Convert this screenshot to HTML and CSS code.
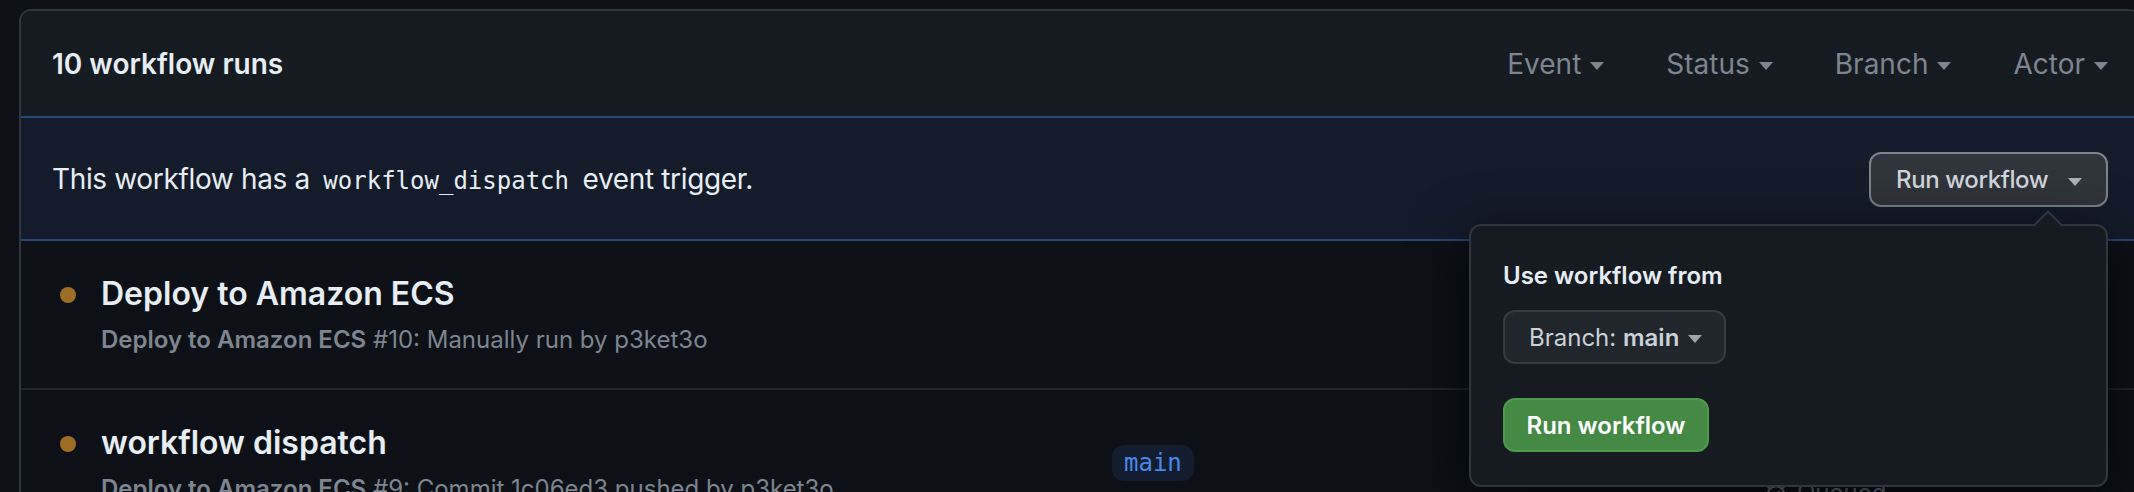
FILE: index.html
```html
<!DOCTYPE html>
<html lang="en">
<head>
<meta charset="utf-8">
<title>Workflow runs</title>
<link rel="stylesheet" href="styles.css">
</head>
<body>
<div class="page">
  <div class="card">
    <div class="header">
      <h3 class="count">10 workflow runs</h3>
      <div class="filters">
        <span class="filter">Event<span class="caret"></span></span>
        <span class="filter">Status<span class="caret"></span></span>
        <span class="filter">Branch<span class="caret"></span></span>
        <span class="filter">Actor<span class="caret"></span></span>
      </div>
    </div>
    <div class="banner">
      <p class="banner-text">This workflow has a <code>workflow_dispatch</code> event trigger.</p>
      <div class="dispatch">
        <button class="btn-run"><span>Run workflow</span><span class="caret"></span></button>
        <div class="popover">
          <div class="pop-label">Use workflow from</div>
          <button class="btn-branch"><span class="b-text"><span class="b-label">Branch:</span> <span class="b-name">main</span></span><span class="caret"></span></button>
          <button class="btn-green">Run workflow</button>
        </div>
      </div>
    </div>
    <div class="runs">
      <div class="run">
        <div class="run-main">
          <span class="dot"></span>
          <div class="run-text">
            <div class="run-title">Deploy to Amazon ECS</div>
            <div class="run-sub"><strong>Deploy to Amazon ECS</strong> #10: Manually run by p3ket3o</div>
          </div>
        </div>
        <div class="run-branch"></div>
        <div class="run-meta"></div>
      </div>
      <div class="run">
        <div class="run-main">
          <span class="dot"></span>
          <div class="run-text">
            <div class="run-title">workflow dispatch</div>
            <div class="run-sub"><strong>Deploy to Amazon ECS</strong> #9: Commit 1c06ed3 pushed by p3ket3o</div>
          </div>
        </div>
        <div class="run-branch"><span class="tag">main</span></div>
        <div class="run-meta">
          <span class="meta-line"><svg class="meta-icon" viewBox="0 0 16 16" width="22" height="22"><path fill="currentColor" d="M5.75.75A.75.75 0 0 1 6.5 0h3a.75.75 0 0 1 0 1.5h-.75v1l-.001.041a6.724 6.724 0 0 1 3.464 1.435l.007-.006.75-.75a.749.749 0 0 1 1.275.326.749.749 0 0 1-.215.734l-.75.75-.006.007a6.75 6.75 0 1 1-10.548 0L2.72 5.03l-.75-.75a.751.751 0 0 1 .018-1.042.751.751 0 0 1 1.042-.018l.75.75.007.006A6.72 6.72 0 0 1 7.250 2.541V1.5H6.5a.75.75 0 0 1-.75-.75ZM8 14.5A5.25 5.250 0 1 0 8 4a5.25 5.25 0 0 0 0 10.5Zm.389-6.7 1.33-1.33a.75.75 0 1 1 1.061 1.06L9.45 8.861A1.503 1.503 0 0 1 8 10.750a1.499 1.499 0 1 1 .389-2.950Z"/></svg>Queued</span>
        </div>
      </div>
    </div>
  </div>
</div>
</body>
</html>
```

FILE: styles.css
```css
* { box-sizing: border-box; }

html, body {
  margin: 0;
  padding: 0;
  background: #0d1117;
  overflow: hidden;
  height: 492px;
}

body {
  font-family: Inter, "Noto Sans", "Liberation Sans", sans-serif;
  color: #e6edf3;
}

.page {
  padding: 9px 0 0 19px;
}

.card {
  width: 2122px;
  border: 2px solid #30363d;
  border-radius: 12px;
  background: #0d1117;
}

.header {
  height: 105px;
  display: flex;
  align-items: center;
  padding: 0 31px 0 31px;
  background: #161b22;
  border-radius: 10px 10px 0 0;
}

.count {
  margin: 0;
  font-size: 28px;
  font-weight: 600;
  color: #e6edf3;
}

.filters {
  margin-left: auto;
  display: flex;
  gap: 62px;
}

.filter {
  display: flex;
  align-items: center;
  font-size: 28px;
  color: #7d8590;
}

.caret {
  display: inline-block;
  flex: none;
  width: 0;
  height: 0;
  border-left: 7.5px solid transparent;
  border-right: 7.5px solid transparent;
  border-top: 8px solid currentColor;
  margin-left: 9px;
  margin-top: 4px;
}

.banner {
  height: 125px;
  display: flex;
  align-items: center;
  justify-content: space-between;
  padding: 0 31px;
  background: #141c2b;
  border-top: 2px solid #284878;
  border-bottom: 2px solid #284878;
}

.banner-text {
  margin: 0;
  font-size: 28px;
  letter-spacing: -0.35px;
  color: #e6edf3;
}

.banner-text code {
  font-family: "DejaVu Sans Mono", "Liberation Mono", monospace;
  font-size: 24px;
  letter-spacing: 0;
  padding: 0 6px;
}

.dispatch {
  position: relative;
  margin-top: 2px;
}

.btn-run {
  display: flex;
  align-items: center;
  justify-content: space-between;
  height: 55px;
  width: 239px;
  padding: 0 24px 0 25px;
  background: #30343b;
  border: 2px solid #7c838c;
  border-radius: 12px;
  font-family: inherit;
  font-size: 24px;
  font-weight: 500;
  letter-spacing: -0.4px;
  white-space: nowrap;
  color: #d0d6dd;
}

.btn-run .caret {
  margin-left: 12px;
  color: #aab1ba;
}

.popover {
  position: absolute;
  top: calc(100% + 17px);
  right: 0;
  width: 639px;
  height: 263px;
  padding: 32px 32px 32px 32px;
  background: #161b22;
  border: 2px solid #30363d;
  border-radius: 12px;
  box-shadow: 0 12px 56px rgba(1, 4, 9, 0.85);
  z-index: 10;
}

.popover::before,
.popover::after {
  content: "";
  position: absolute;
  right: 44px;
  width: 0;
  height: 0;
  border-left: 14px solid transparent;
  border-right: 14px solid transparent;
}

.popover::before {
  top: -16px;
  border-bottom: 14px solid #30363d;
}

.popover::after {
  top: -13px;
  border-bottom: 14px solid #161b22;
}

.pop-label {
  font-size: 24px;
  font-weight: 600;
  line-height: 36px;
  color: #e6edf3;
}

.btn-branch {
  display: flex;
  align-items: center;
  margin-top: 16px;
  height: 54px;
  width: 223px;
  padding: 0 22px 0 24px;
  background: #21262d;
  border: 2px solid #363b42;
  border-radius: 12px;
  font-family: inherit;
  font-size: 24px;
  color: #c9d1d9;
  white-space: nowrap;
}

.b-label { font-weight: 400; }
.b-name { font-weight: 600; }

.btn-branch .caret {
  margin-left: 9px;
  color: #9da5ae;
}

.btn-green {
  display: block;
  margin-top: 34px;
  height: 54px;
  width: 206px;
  padding: 0;
  background: #448944;
  border: 2px solid #4f9a4d;
  border-radius: 12px;
  font-family: inherit;
  font-size: 24px;
  font-weight: 600;
  color: #ffffff;
}

.run {
  display: grid;
  grid-template-columns: 1091px 653px 1fr;
  height: 147px;
}

.run + .run {
  border-top: 2px solid #21262d;
}

.run-main {
  display: flex;
  align-items: flex-start;
  padding: 33px 0 0 39px;
}

.dot {
  flex: none;
  width: 16px;
  height: 16px;
  border-radius: 50%;
  background: #9e6d24;
  margin-top: 13px;
  margin-right: 25px;
}

.run-title {
  font-size: 32px;
  font-weight: 600;
  line-height: 40px;
  color: #e6edf3;
}

.run-sub {
  margin-top: 8px;
  font-size: 24px;
  line-height: 36px;
  color: #7d8590;
}

.run-sub strong {
  font-weight: 600;
}

.run-branch {
  display: flex;
  align-items: center;
}

.tag {
  display: inline-block;
  height: 36px;
  padding: 0 12px;
  border-radius: 12px;
  background: #121d2f;
  color: #4a88e8;
  font-family: "DejaVu Sans Mono", "Liberation Mono", monospace;
  font-size: 24px;
  line-height: 36px;
}

.run-meta {
  padding-top: 85px;
  font-size: 24px;
  line-height: 36px;
  color: #7d8590;
}

.meta-line {
  display: flex;
  align-items: center;
  gap: 10px;
}

.meta-icon {
  flex: none;
}
```
